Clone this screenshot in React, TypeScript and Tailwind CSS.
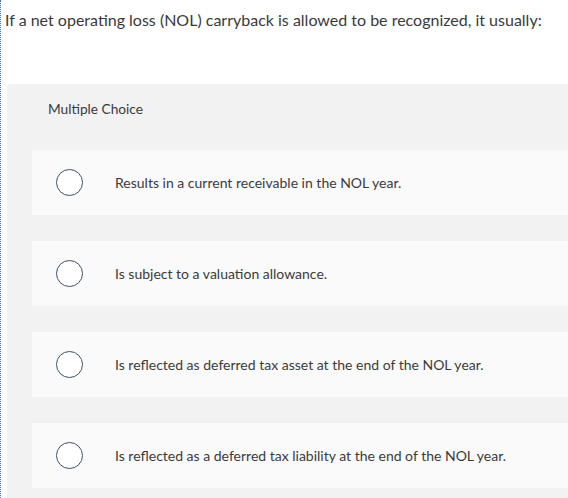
export default function App() {
  const options = [
    "Results in a current receivable in the NOL year.",
    "Is subject to a valuation allowance.",
    "Is reflected as deferred tax asset at the end of the NOL year.",
    "Is reflected as a deferred tax liability at the end of the NOL year.",
  ]

  return (
    <div
      className="h-[498px] w-[568px] overflow-hidden border-l border-dotted border-[#4a6fa5] bg-white text-[#333]"
      style={{ fontFamily: "Lato, 'Open Sans', sans-serif" }}
    >
      <p className="pl-1 pt-[9px] text-[16px] leading-[22px] text-[#3a3a3a]">
        If a net operating loss (NOL) carryback is allowed to be recognized, it usually:
      </p>
      <div className="ml-[6px] mt-[53px] h-[500px] bg-[#f2f2f2] pl-[25px]">
        <div className="h-[66px] pl-[16px] pt-[16px] text-[13.7px] leading-[18px] text-[#3a3a3a]">Multiple Choice</div>
        <div className="flex flex-col gap-[26px]">
          {options.map((o) => (
            <div key={o} className="flex h-[65px] items-center bg-[#fafafa]">
              <span className="ml-[24px] h-[27px] w-[27px] rounded-full border-[1.5px] border-[#3d5168] bg-white" />
              <span className="ml-[32px] text-[14px] text-[#3a3a3a]">{o}</span>
            </div>
          ))}
        </div>
      </div>
    </div>
  )
}
